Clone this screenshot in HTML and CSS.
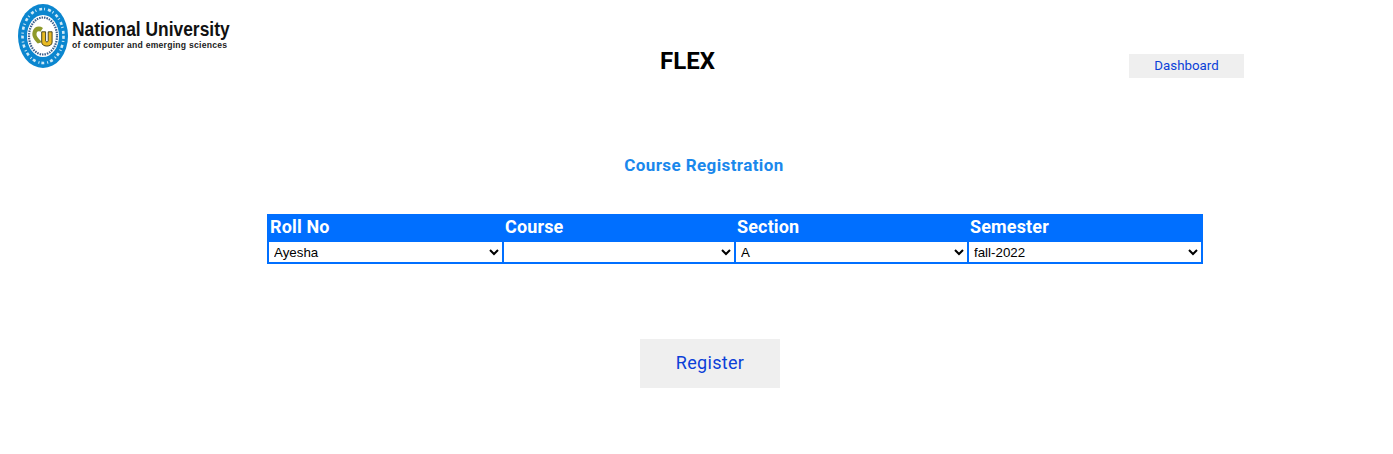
FILE: index.html
```html
<!DOCTYPE html>
<html lang="en">
<head>
<meta charset="utf-8">
<title>FLEX</title>
<link rel="stylesheet" href="styles.css">
</head>
<body>
<header class="top">
  <svg class="logo" width="216" height="70" viewBox="0 0 216 70" role="img" aria-label="National University">
    <ellipse cx="25" cy="36" rx="25" ry="32" fill="#0b86cf"/>
    <ellipse cx="25" cy="36" rx="20.5" ry="27" fill="none" stroke="#cfe9f6" stroke-width="2.6" stroke-dasharray="3 2 1 3"/>
    <ellipse cx="25" cy="36" rx="16" ry="21" fill="#fff"/>
    <ellipse cx="25" cy="36" rx="14" ry="18.5" fill="none" stroke="#3b5f8c" stroke-width="2.2" stroke-dasharray="1.5 1"/>
    <ellipse cx="25" cy="36" rx="11.5" ry="15.5" fill="#fff"/>
    <g transform="translate(25 37) scale(1.3) translate(-25 -37)">
      <path d="M17 33c1-4 5-5 8-3l-2 3c-2-1-3 0-3 2s3 4 4 6l-3 1c-2-2-5-5-4-9z" fill="#8f9a2a"/>
      <path d="M24 33h3v7c0 1 2 1 2 0v-7h3v8c0 4-8 4-8 0z" fill="#e8b923" stroke="#3a3a1a" stroke-width=".7"/>
    </g>
    <text class="logo-title" transform="translate(54 36) scale(1 1.15)">National University</text>
    <text class="logo-sub" x="54" y="48" textLength="155" lengthAdjust="spacing">of computer and emerging sciences</text>
  </svg>
  <h1 class="brand">FLEX</h1>
  <a class="dash" href="#">Dashboard</a>
</header>
<h2 class="heading">Course Registration</h2>
<form class="reg">
  <div class="grid">
    <div class="th">Roll No</div>
    <div class="th">Course</div>
    <div class="th">Section</div>
    <div class="th">Semester</div>
    <select class="sel"><option>Ayesha</option></select>
    <select class="sel"><option></option></select>
    <select class="sel"><option>A</option></select>
    <select class="sel"><option>fall-2022</option></select>
  </div>
  <button class="submit" type="button">Register</button>
</form>
</body>
</html>
```
FILE: styles.css
```css
* { box-sizing: border-box; }
html, body { margin: 0; padding: 0; background: #fff; }
body { font-family: Roboto, "Liberation Sans", sans-serif; height: 454px; overflow: hidden; }
.top {
  display: grid;
  grid-template-columns: 18px 216px 1fr 115px 149px;
  height: 78px;
}
.logo { grid-column: 2; display: block; }
.logo-title { font: 700 17.4px "Liberation Sans", sans-serif; fill: #111; }
.logo-sub { font: 700 8.6px "Liberation Sans", sans-serif; fill: #222; }
.brand {
  grid-column: 3;
  margin: 47px 0 0 0;
  padding-left: 12px;
  text-align: center;
  font-size: 24px;
  line-height: 28px;
  font-weight: 700;
  color: #000;
}
.dash {
  grid-column: 4;
  margin-top: 54px;
  height: 24px;
  background: #efefef;
  color: #0b3fd8;
  font-size: 13.3px;
  line-height: 23px;
  text-align: center;
  text-decoration: none;
}
.heading {
  margin: 76px 0 0 0;
  width: 1408px;
  text-align: center;
  font-size: 17px;
  line-height: 22px;
  font-weight: 700;
  color: #1a88ec;
  letter-spacing: .4px;
}
.reg { display: flex; flex-direction: column; align-items: flex-start; }
.grid {
  margin: 38px 0 0 267px;
  width: 936px;
  display: grid;
  grid-template-columns: 233px 230px 231px 232px;
  column-gap: 2px;
  background: #006fff;
  padding: 0 2px 2px;
}
.th {
  height: 28px;
  padding-left: 1px;
  font-size: 18px;
  line-height: 26px;
  font-weight: 700;
  color: #fff;
  letter-spacing: .15px;
}
.sel {
  height: 20px;
  width: 100%;
  border: 0;
  border-radius: 0;
  background: #fff;
  font: 13.33px "Liberation Sans", sans-serif;
  color: #000;
  padding: 0 0 0 1px;
  outline: 0;
}
.submit {
  margin: 75px 0 0 640px;
  width: 140px;
  height: 49px;
  padding: 0 0 2px;
  border: 0;
  background: #efefef;
  color: #0b3fd8;
  font: 400 18px Roboto, sans-serif;
  letter-spacing: .3px;
}
```
